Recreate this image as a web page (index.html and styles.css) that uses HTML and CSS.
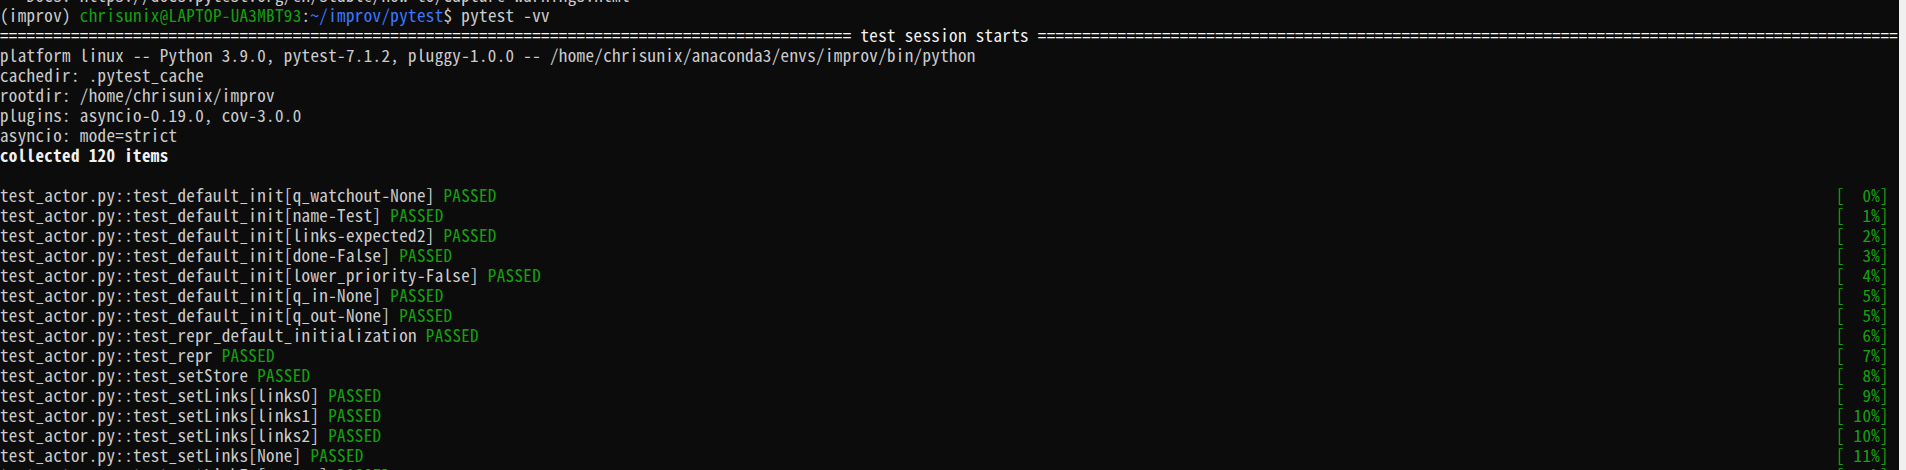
FILE: index.html
```html
<!DOCTYPE html>
<html>
<head>
<meta charset="utf-8">
<link rel="stylesheet" href="styles.css">
</head>
<body>
<div class="window">
  <div class="term">
    <div class="lines">
      <div class="line">-- Docs: https://docs.pytest.org/en/stable/how-to/capture-warnings.html</div>
      <div class="line">(improv) <span class="g">chrisunix@LAPTOP-UA3MBT93</span>:<span class="b">~/improv/pytest</span>$ pytest -vv</div>
      <div class="line sep">================================================================================================ test session starts =================================================================================================</div>
      <div class="line">platform linux -- Python 3.9.0, pytest-7.1.2, pluggy-1.0.0 -- /home/chrisunix/anaconda3/envs/improv/bin/python</div>
      <div class="line">cachedir: .pytest_cache</div>
      <div class="line">rootdir: /home/chrisunix/improv</div>
      <div class="line">plugins: asyncio-0.19.0, cov-3.0.0</div>
      <div class="line">asyncio: mode=strict</div>
      <div class="line bold">collected 120 items</div>
      <div class="line"> </div>
      <div class="line row"><span>test_actor.py::test_default_init[q_watchout-None] <span class="g">PASSED</span></span><span class="g">[  0%]</span></div>
      <div class="line row"><span>test_actor.py::test_default_init[name-Test] <span class="g">PASSED</span></span><span class="g">[  1%]</span></div>
      <div class="line row"><span>test_actor.py::test_default_init[links-expected2] <span class="g">PASSED</span></span><span class="g">[  2%]</span></div>
      <div class="line row"><span>test_actor.py::test_default_init[done-False] <span class="g">PASSED</span></span><span class="g">[  3%]</span></div>
      <div class="line row"><span>test_actor.py::test_default_init[lower_priority-False] <span class="g">PASSED</span></span><span class="g">[  4%]</span></div>
      <div class="line row"><span>test_actor.py::test_default_init[q_in-None] <span class="g">PASSED</span></span><span class="g">[  5%]</span></div>
      <div class="line row"><span>test_actor.py::test_default_init[q_out-None] <span class="g">PASSED</span></span><span class="g">[  5%]</span></div>
      <div class="line row"><span>test_actor.py::test_repr_default_initialization <span class="g">PASSED</span></span><span class="g">[  6%]</span></div>
      <div class="line row"><span>test_actor.py::test_repr <span class="g">PASSED</span></span><span class="g">[  7%]</span></div>
      <div class="line row"><span>test_actor.py::test_setStore <span class="g">PASSED</span></span><span class="g">[  8%]</span></div>
      <div class="line row"><span>test_actor.py::test_setLinks[links0] <span class="g">PASSED</span></span><span class="g">[  9%]</span></div>
      <div class="line row"><span>test_actor.py::test_setLinks[links1] <span class="g">PASSED</span></span><span class="g">[ 10%]</span></div>
      <div class="line row"><span>test_actor.py::test_setLinks[links2] <span class="g">PASSED</span></span><span class="g">[ 10%]</span></div>
      <div class="line row"><span>test_actor.py::test_setLinks[None] <span class="g">PASSED</span></span><span class="g">[ 11%]</span></div>
      <div class="line row"><span>test_actor.py::test_setLinkIn[q_comm] <span class="g">PASSED</span></span><span class="g">[ 12%]</span></div>
    </div>
  </div>
  <div class="scroll"></div>
</div>
</body>
</html>
```

FILE: styles.css
```css
html, body {
  margin: 0;
  padding: 0;
  background: #0c0c0c;
}
.window {
  display: flex;
  width: 1906px;
  height: 470px;
  overflow: hidden;
}
.term {
  flex: 1;
  overflow: hidden;
  background: #0c0c0c;
  color: #cccccc;
  font-family: "Noto Sans Mono CJK KR", "DejaVu Sans Mono", monospace;
  font-size: 17px;
  letter-spacing: 0.37px;
}
.scroll {
  width: 7px;
  background: #f0f0f0;
}
.lines {
  margin-top: -15px;
}
.line {
  height: 20px;
  line-height: 20px;
  white-space: pre;
}
.row {
  display: flex;
  justify-content: space-between;
  padding-right: 10px;
}
.g { color: #13a10e; }
.b { color: #3b78ff; }
.sep { color: #f2f2f2; }
.bold { color: #f2f2f2; font-weight: 600; }
```
